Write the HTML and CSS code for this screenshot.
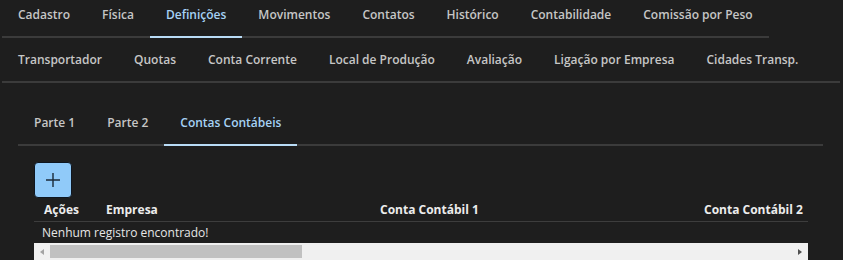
FILE: index.html
```html
<!DOCTYPE html>
<html lang="pt-BR">
<head>
  <meta charset="UTF-8">
  <title>Definições - Contas Contábeis</title>
  <link rel="stylesheet" href="styles.css">
</head>
<body>
  <nav class="tabs-main">
    <div class="tab-row">
      <a class="tab">Cadastro</a>
      <a class="tab">Física</a>
      <a class="tab active">Definições</a>
      <a class="tab">Movimentos</a>
      <a class="tab">Contatos</a>
      <a class="tab">Histórico</a>
      <a class="tab">Contabilidade</a>
      <a class="tab">Comissão por Peso</a>
    </div>
    <div class="tab-row wide">
      <a class="tab">Transportador</a>
      <a class="tab">Quotas</a>
      <a class="tab">Conta Corrente</a>
      <a class="tab">Local de Produção</a>
      <a class="tab">Avaliação</a>
      <a class="tab">Ligação por Empresa</a>
      <a class="tab">Cidades Transp.</a>
    </div>
  </nav>

  <section class="panel">
    <div class="tab-row sub">
      <a class="tab">Parte 1</a>
      <a class="tab">Parte 2</a>
      <a class="tab active">Contas Contábeis</a>
    </div>

    <div class="panel-body">
      <button class="btn-add" title="Adicionar">
        <svg width="16" height="16" viewBox="0 0 16 16">
          <path d="M8 1v14M1 8h14" stroke="#1b2a38" stroke-width="1.4" fill="none"/>
        </svg>
      </button>

      <div class="grid">
        <div class="grid-view">
          <div class="grid-head">
            <span class="col-acoes">Ações</span>
            <span class="col-empresa">Empresa</span>
            <span class="col-conta1">Conta Contábil 1</span>
            <span class="col-conta2">Conta Contábil 2</span>
          </div>
          <div class="grid-empty">Nenhum registro encontrado!</div>
        </div>
        <div class="hscroll">
          <span class="arrow left"></span>
          <div class="track"><div class="thumb"></div></div>
          <span class="arrow right"></span>
        </div>
      </div>
    </div>
  </section>
</body>
</html>
```

FILE: styles.css
```css
:root {
  --clr-bg: #1e1e1e;
  --clr-line: #3b3b3b;
  --clr-text: #c6c6c6;
  --clr-head: #ececec;
  --clr-accent: #a6d2f5;
  --clr-button: #90caf9;
}
*, *::before, *::after {box-sizing: border-box; margin: 0}
html, body {
  background: var(--clr-bg);
  overflow: hidden;
}
body {
  font-family: 'Open Sans', 'Noto Sans', sans-serif;
  font-size: 12px;
  color: var(--clr-text);
}
.tabs-main {
  margin-top: -7px;
  padding-left: 2px;
}
.tab-row {
  display: flex;
  width: fit-content;
  border-bottom: 2px solid var(--clr-line);
}
.tab-row.wide {
  width: 838px;
}
.tab {
  height: 45px;
  padding: 0 16px;
  display: flex;
  align-items: center;
  font-weight: 600;
  white-space: nowrap;
  border-bottom: 2px solid transparent;
  margin-bottom: -2px;
  cursor: pointer;
}
.tab.active {
  color: var(--clr-accent);
  border-bottom-color: #b9dcf6;
}
.panel {
  margin-top: 18px;
  padding: 0 20px 0 18px;
}
.tab-row.sub {
  width: 100%;
}
.panel-body {
  padding: 16px 15px 0 16px;
}
.btn-add {
  width: 38px;
  height: 36px;
  display: grid;
  place-items: center;
  background: var(--clr-button);
  border: 1px solid #0e1620;
  border-radius: 4px;
  cursor: pointer;
}
.grid-view {
  overflow: hidden;
}
.grid-head {
  display: grid;
  grid-template-columns: 62px 274px 324px 1600px;
  height: 24px;
  align-items: center;
  border-bottom: 1px solid #3d3d3d;
  font-weight: 700;
  font-size: 12px;
  color: var(--clr-head);
}
.grid-head span {
  padding-left: 10px;
  white-space: nowrap;
}
.grid-empty {
  height: 21px;
  padding-left: 8px;
  display: flex;
  align-items: center;
  color: #e6e6e6;
  font-size: 12px;
}
.hscroll {
  height: 17px;
  display: flex;
  align-items: center;
  background: #f0f0f0;
}
.track {
  flex: 1;
  height: 13px;
}
.thumb {
  width: 252px;
  height: 100%;
  background: #c1c1c1;
}
.arrow {
  width: 16px;
  height: 17px;
  display: grid;
  place-items: center;
}
.arrow::before {
  content: '';
  border: 3px solid transparent;
}
.arrow.left::before {
  border-right: 4px solid #a3a3a3;
  border-left-width: 0;
}
.arrow.right::before {
  border-left: 4px solid #505050;
  border-right-width: 0;
}
```
